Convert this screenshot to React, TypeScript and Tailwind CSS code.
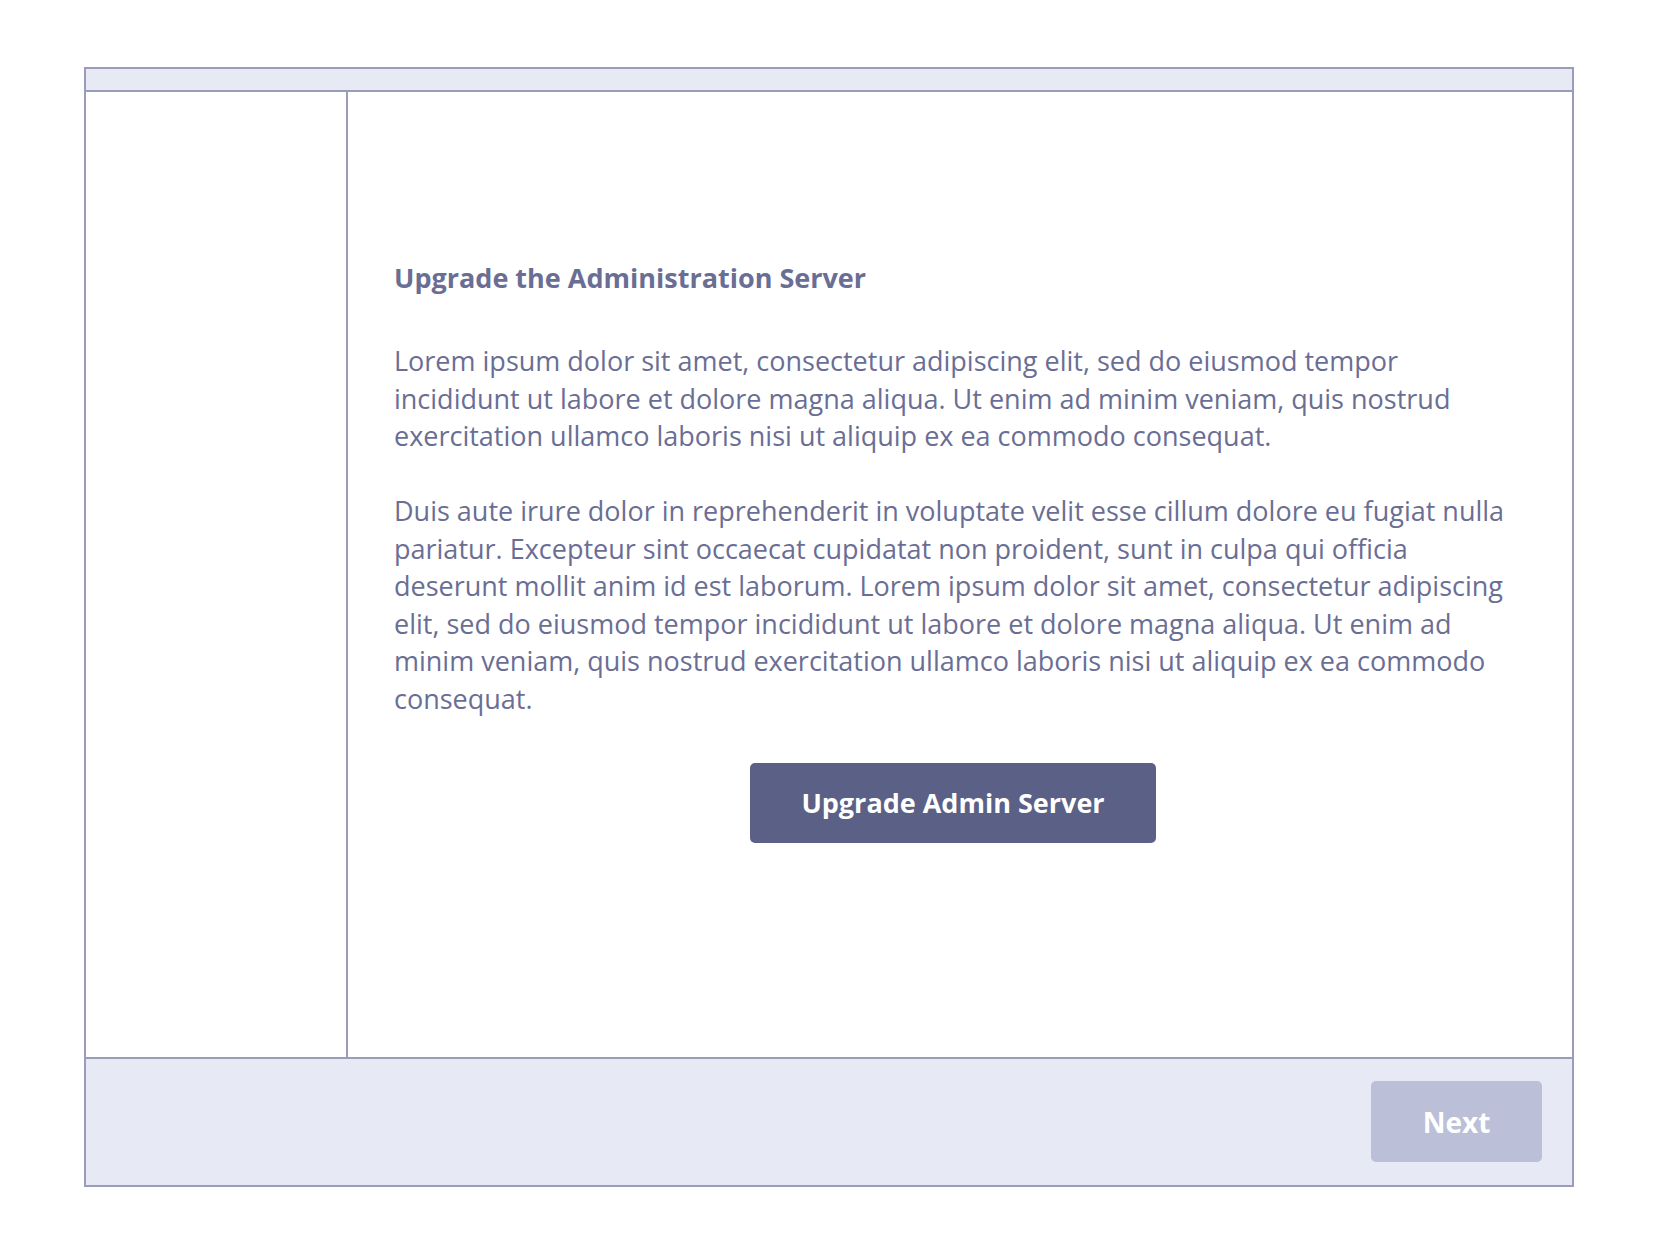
const textColor = 'text-[#6a6e94]';

function Sidebar() {
  return <aside className="w-[262px] shrink-0 border-r-2 border-[#9a9cba] bg-white" />;
}

function MainPanel() {
  return (
    <main className={`flex-1 pl-[46px] pt-[168px] ${textColor}`}>
      <div className="w-[1122px]">
        <h1 className="text-[27px] leading-[36px] font-bold">Upgrade the Administration Server</h1>
        <p className="mt-[46px] text-[27px] leading-[37.5px]">
          Lorem ipsum dolor sit amet, consectetur adipiscing elit, sed do eiusmod tempor incididunt ut labore et dolore
          magna aliqua. Ut enim ad minim veniam, quis nostrud exercitation ullamco laboris nisi ut aliquip ex ea commodo
          consequat.
        </p>
        <p className="mt-[37.5px] text-[27px] leading-[37.5px]">
          Duis aute irure dolor in reprehenderit in voluptate velit esse cillum dolore eu fugiat nulla pariatur. Excepteur
          sint occaecat cupidatat non proident, sunt in culpa qui officia deserunt mollit anim id est laborum. Lorem ipsum
          dolor sit amet, consectetur adipiscing elit, sed do eiusmod tempor incididunt ut labore et dolore magna aliqua. Ut
          enim ad minim veniam, quis nostrud exercitation ullamco laboris nisi ut aliquip ex ea commodo consequat.
        </p>
        <div className="mt-[46px] flex justify-center pr-[4px]">
          <button className="w-[406px] h-[80px] rounded-[5px] bg-[#5b6086] text-white text-[27px] font-bold">
            Upgrade Admin Server
          </button>
        </div>
      </div>
    </main>
  );
}

export default function App() {
  return (
    <div className="min-h-screen bg-white pt-[67px] pl-[84px]" style={{ fontFamily: '"Open Sans", sans-serif' }}>
      <div className="w-[1490px] h-[1120px] border-2 border-[#9a9cba] flex flex-col">
        <div className="h-[23px] shrink-0 bg-[#e7e9f5] border-b-2 border-[#9a9cba]" />
        <div className="h-[965px] shrink-0 flex">
          <Sidebar />
          <MainPanel />
        </div>
        <footer className="flex-1 bg-[#e7e9f5] border-t-2 border-[#9a9cba] flex items-start justify-end pt-[22px] pr-[30px]">
          <button className="w-[171px] h-[81px] rounded-[5px] bg-[#bbbfd7] text-white text-[28px] font-bold">
            Next
          </button>
        </footer>
      </div>
    </div>
  );
}
